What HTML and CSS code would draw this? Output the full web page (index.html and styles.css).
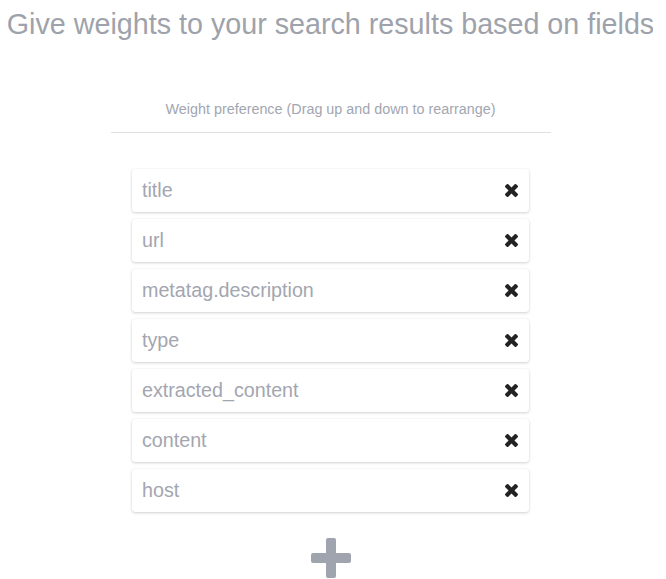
FILE: index.html
```html
<!DOCTYPE html>
<html>
<head>
<meta charset="utf-8">
<link rel="stylesheet" href="styles.css">
</head>
<body>
<h1 class="title">Give weights to your search results based on fields</h1>
<div class="section">
  <div class="subtitle">Weight preference (Drag up and down to rearrange)</div>
  <ul class="fields">
    <li class="field"><span class="name">title</span><svg class="remove" viewBox="110 366 1188 1188"><path d="M1298 1322q0 40-28 68l-136 136q-28 28-68 28t-68-28l-294-294-294 294q-28 28-68 28t-68-28l-136-136q-28-28-28-68t28-68l294-294-294-294q-28-28-28-68t28-68l136-136q28-28 68-28t68 28l294 294 294-294q28-28 68-28t68 28l136 136q28 28 28 68t-28 68l-294 294 294 294q28 28 28 68z"/></svg></li>
    <li class="field"><span class="name">url</span><svg class="remove" viewBox="110 366 1188 1188"><path d="M1298 1322q0 40-28 68l-136 136q-28 28-68 28t-68-28l-294-294-294 294q-28 28-68 28t-68-28l-136-136q-28-28-28-68t28-68l294-294-294-294q-28-28-28-68t28-68l136-136q28-28 68-28t68 28l294 294 294-294q28-28 68-28t68 28l136 136q28 28 28 68t-28 68l-294 294 294 294q28 28 28 68z"/></svg></li>
    <li class="field"><span class="name">metatag.description</span><svg class="remove" viewBox="110 366 1188 1188"><path d="M1298 1322q0 40-28 68l-136 136q-28 28-68 28t-68-28l-294-294-294 294q-28 28-68 28t-68-28l-136-136q-28-28-28-68t28-68l294-294-294-294q-28-28-28-68t28-68l136-136q28-28 68-28t68 28l294 294 294-294q28-28 68-28t68 28l136 136q28 28 28 68t-28 68l-294 294 294 294q28 28 28 68z"/></svg></li>
    <li class="field"><span class="name">type</span><svg class="remove" viewBox="110 366 1188 1188"><path d="M1298 1322q0 40-28 68l-136 136q-28 28-68 28t-68-28l-294-294-294 294q-28 28-68 28t-68-28l-136-136q-28-28-28-68t28-68l294-294-294-294q-28-28-28-68t28-68l136-136q28-28 68-28t68 28l294 294 294-294q28-28 68-28t68 28l136 136q28 28 28 68t-28 68l-294 294 294 294q28 28 28 68z"/></svg></li>
    <li class="field"><span class="name">extracted_content</span><svg class="remove" viewBox="110 366 1188 1188"><path d="M1298 1322q0 40-28 68l-136 136q-28 28-68 28t-68-28l-294-294-294 294q-28 28-68 28t-68-28l-136-136q-28-28-28-68t28-68l294-294-294-294q-28-28-28-68t28-68l136-136q28-28 68-28t68 28l294 294 294-294q28-28 68-28t68 28l136 136q28 28 28 68t-28 68l-294 294 294 294q28 28 28 68z"/></svg></li>
    <li class="field"><span class="name">content</span><svg class="remove" viewBox="110 366 1188 1188"><path d="M1298 1322q0 40-28 68l-136 136q-28 28-68 28t-68-28l-294-294-294 294q-28 28-68 28t-68-28l-136-136q-28-28-28-68t28-68l294-294-294-294q-28-28-28-68t28-68l136-136q28-28 68-28t68 28l294 294 294-294q28-28 68-28t68 28l136 136q28 28 28 68t-28 68l-294 294 294 294q28 28 28 68z"/></svg></li>
    <li class="field"><span class="name">host</span><svg class="remove" viewBox="110 366 1188 1188"><path d="M1298 1322q0 40-28 68l-136 136q-28 28-68 28t-68-28l-294-294-294 294q-28 28-68 28t-68-28l-136-136q-28-28-28-68t28-68l294-294-294-294q-28-28-28-68t28-68l136-136q28-28 68-28t68 28l294 294 294-294q28-28 68-28t68 28l136 136q28 28 28 68t-28 68l-294 294 294 294q28 28 28 68z"/></svg></li>
  </ul>
  <div class="add"><span class="add-h"></span><span class="add-v"></span></div>
</div>
</body>
</html>
```
FILE: styles.css
```css
html {
  background: #ffffff;
  overflow: hidden;
}
body {
  margin: 8px 13px 0 8px;
  font-family: "Liberation Sans", Arial, sans-serif;
}
.title {
  margin: 0 -12px;
  font-size: 28.7px;
  font-weight: normal;
  line-height: 32px;
  text-align: center;
  color: #9ea2ab;
  white-space: nowrap;
}
.section {
  display: flex;
  flex-direction: column;
  align-items: center;
}
.subtitle {
  width: 440px;
  margin-top: 61px;
  padding-bottom: 15px;
  border-bottom: 1px solid #e0e0e4;
  font-size: 14.35px;
  line-height: 16px;
  text-align: center;
  color: #a2a6b0;
}
.fields {
  list-style: none;
  margin: 36px 0 0 0;
  padding: 0;
  width: 397px;
  display: flex;
  flex-direction: column;
  gap: 7px;
}
.field {
  height: 43px;
  display: flex;
  align-items: center;
  justify-content: space-between;
  padding: 0 10px;
  background: #ffffff;
  border-radius: 3px;
  box-shadow: 0 1px 3px rgba(0, 0, 0, 0.18), 0 0 1px rgba(0, 0, 0, 0.08);
}
.name {
  font-size: 19.7px;
  color: #a3a6b0;
}
.remove {
  width: 13px;
  height: 13px;
  margin-right: 1px;
  fill: #222222;
}
.add {
  position: relative;
  width: 40px;
  height: 40px;
  margin-top: 26px;
}
.add-h, .add-v {
  position: absolute;
  background: #a0a4ae;
  border-radius: 2px;
}
.add-h {
  left: 0;
  top: 15px;
  width: 40px;
  height: 10px;
}
.add-v {
  left: 15px;
  top: 0;
  width: 10px;
  height: 40px;
}
```
